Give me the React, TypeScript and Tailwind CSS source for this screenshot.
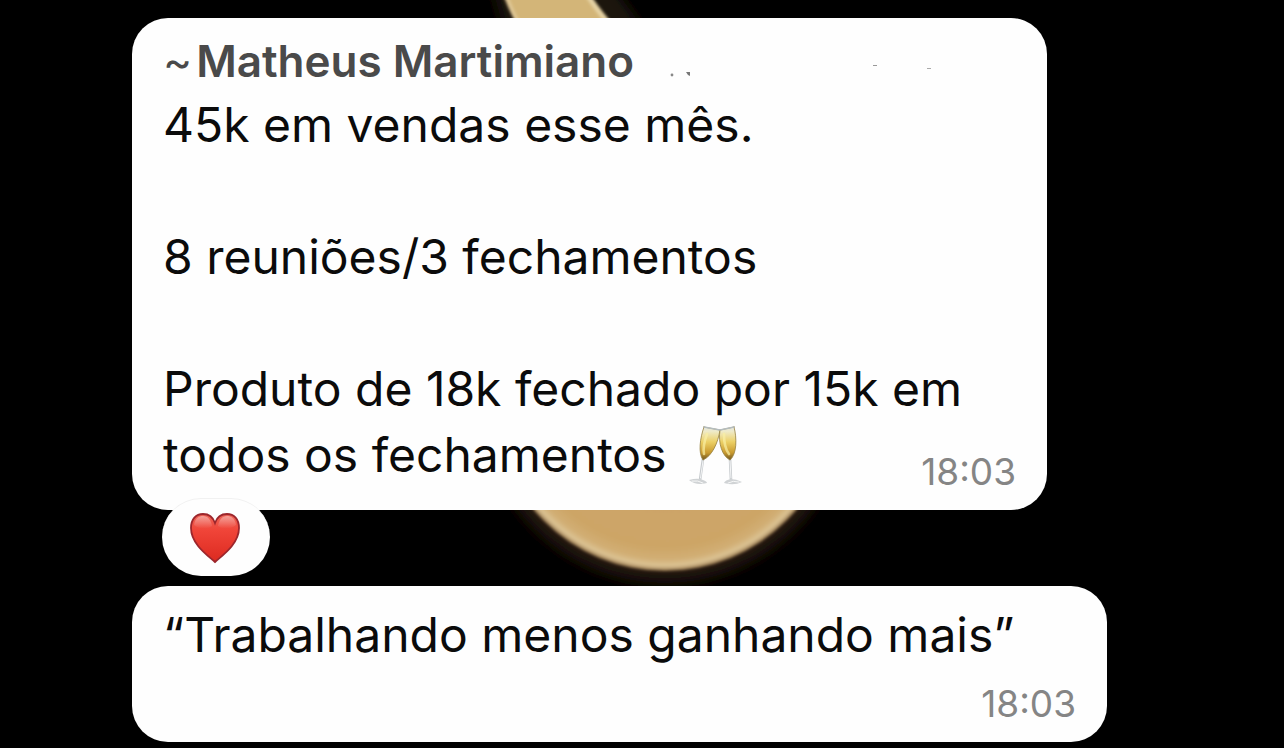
import type { ReactNode } from 'react';

function Backdrop() {
  return (
    <svg
      className="absolute inset-0 h-full w-full"
      viewBox="0 0 1284 748"
      preserveAspectRatio="xMidYMid slice"
      aria-hidden="true"
    >
      <defs>
        <radialGradient id="gold" gradientUnits="userSpaceOnUse" cx="665" cy="399" r="172">
          <stop offset="0.6" stopColor="#cca468" />
          <stop offset="0.86" stopColor="#cda566" />
          <stop offset="0.93" stopColor="#d1ae74" />
          <stop offset="0.97" stopColor="#dcc394" />
          <stop offset="1" stopColor="#94744a" />
        </radialGradient>
        <filter id="halo" x="-20%" y="-20%" width="140%" height="140%">
          <feGaussianBlur stdDeviation="7" />
        </filter>
        <filter id="soft" x="-10%" y="-10%" width="120%" height="120%">
          <feGaussianBlur stdDeviation="1.6" />
        </filter>
      </defs>
      <path d="M490 -20 L504 30 H645 L608 -20 Z" fill="#1c1509" filter="url(#halo)" />
      <circle cx="665" cy="399" r="184" fill="#24190c" filter="url(#halo)" />
      <g filter="url(#soft)">
        <path d="M498 -20 Q506 6 520 30 H617 Q600 10 580 -20 Z" fill="#d3b578" />
        <path d="M501 -20 Q508 6 522 30" fill="none" stroke="#e0c896" strokeWidth="4" />
        <path d="M578 -20 Q596 10 615 30" fill="none" stroke="#e6d3a4" strokeWidth="5" />
        <circle cx="665" cy="399" r="172" fill="url(#gold)" />
      </g>
    </svg>
  );
}

function Glasses() {
  return (
    <svg
      className="ml-2 inline-block h-[60px] w-[54px] align-[-13px]"
      viewBox="0 0 54 60"
      role="img"
      aria-label="Brinde"
    >
      <defs>
        <linearGradient id="wine" x1="0" y1="0" x2="0" y2="1">
          <stop offset="0" stopColor="#e3e6e2" />
          <stop offset="0.14" stopColor="#efeac6" />
          <stop offset="0.45" stopColor="#ecd066" />
          <stop offset="0.78" stopColor="#c99a2f" />
          <stop offset="1" stopColor="#6f5520" />
        </linearGradient>
      </defs>
      <g strokeLinecap="round">
        <path d="M15 34 L12 55" stroke="#c6cacd" strokeWidth="2.6" />
        <path d="M15 36 L12.5 53" stroke="#f4f5f6" strokeWidth="1" />
        <path d="M1 55 Q8 53 12 54 Q19 56 19 58 Q8 61 1 55 Z" fill="#d0d3d5" />
        <path d="M4 56 Q10 55 15 58" fill="none" stroke="#f7f8f8" strokeWidth="1" />
        <path d="M16 2 L32 5 C30 18 24 31 15 35 C10 28 12 13 16 2 Z" fill="url(#wine)" stroke="#96803f" strokeWidth="0.8" />
        <path d="M19 9 C16 17 15 24 16 29" fill="none" stroke="#f9efa4" strokeWidth="2.6" opacity="0.7" />
        <path d="M42 34 L43 55" stroke="#c6cacd" strokeWidth="2.6" />
        <path d="M42 36 L43 53" stroke="#f4f5f6" strokeWidth="1" />
        <path d="M54 57 Q48 54 43 54 Q37 55 36 58 Q46 61 54 57 Z" fill="#d0d3d5" />
        <path d="M51 57 Q45 55 40 58" fill="none" stroke="#f7f8f8" strokeWidth="1" />
        <path d="M46 2 L32 5 C30 18 34 31 42 35 C49 29 49 13 46 2 Z" fill="url(#wine)" stroke="#96803f" strokeWidth="0.8" />
        <path d="M36 9 C36 17 37 24 41 29" fill="none" stroke="#f9efa4" strokeWidth="2.6" opacity="0.7" />
        <path d="M16 2 L32 5 L46 2" fill="none" stroke="#b4bcbe" strokeWidth="1.4" />
      </g>
    </svg>
  );
}

function Heart() {
  return (
    <svg className="h-[52px] w-[52px]" viewBox="0 0 52 52" role="img" aria-label="Amei">
      <defs>
        <linearGradient id="heart" x1="0" y1="0" x2="0" y2="1">
          <stop offset="0" stopColor="#ee6558" />
          <stop offset="0.35" stopColor="#f04438" />
          <stop offset="1" stopColor="#dc2a20" />
        </linearGradient>
        <linearGradient id="shine" x1="0" y1="0" x2="0" y2="1">
          <stop offset="0" stopColor="#fff" stopOpacity="0.4" />
          <stop offset="1" stopColor="#fff" stopOpacity="0" />
        </linearGradient>
      </defs>
      <path
        d="M25 50 C20 45 1 33 1 16 C1 7 6 2 13 2 C19 2 23 5 25 11 C27 5 31 2 37 2 C44 2 49 7 49 16 C49 33 30 45 25 50 Z"
        fill="url(#heart)"
        stroke="#9c262c"
        strokeWidth="1.8"
      />
      <path d="M4 13 C5 6 9 4 13 4 C18 4 21 8 22 14 C16 18 9 17 4 13 Z" fill="url(#shine)" />
      <path d="M46 13 C45 6 41 4 37 4 C32 4 29 8 28 14 C34 18 41 17 46 13 Z" fill="url(#shine)" />
    </svg>
  );
}

function Specks() {
  return (
    <svg className="mb-3 h-4 w-[264px] self-end" viewBox="0 0 264 16" aria-hidden="true">
      <circle cx="2" cy="11" r="1.4" fill="#888" />
      <path d="M16 8 L20 8 L20 12 L18 11 Z" fill="#777" />
      <path d="M203 1.5 H207" stroke="#999" />
      <path d="M257 4.5 H261" stroke="#aaa" />
    </svg>
  );
}

function Bubble({ className, children }: { className: string; children: ReactNode }) {
  return (
    <article className={`w-full rounded-[36px] bg-[#fefefe] px-[31px] pb-4 ${className}`}>{children}</article>
  );
}

function Time({ className }: { className: string }) {
  return (
    <time dateTime="18:03" className={`text-[37px] leading-[44px] text-[#858585] ${className}`}>
      18:03
    </time>
  );
}

export default function App() {
  return (
    <main className="relative min-h-screen overflow-hidden bg-black font-['Inter',sans-serif] text-[#0b0b0b]">
      <Backdrop />
      <div className="relative ml-[132px] mr-4 flex flex-col items-start pb-1 pt-[18px]">
        <Bubble className="max-w-[915px] pt-3">
          <header className="flex items-center text-[44px] leading-[62px] text-[#4a4a4a]">
            <span className="mr-1">~</span>
            <h1 className="mr-9 font-semibold">Matheus Martimiano</h1>
            <Specks />
          </header>
          <div className="flow-root text-[48px] leading-[66px]">
            <p className="mb-[66px]">45k em vendas esse mês.</p>
            <p className="mb-[66px]">8 reuniões/3 fechamentos</p>
            {/* the time floats beside the last line */}
            <p>
              Produto de 18k fechado por 15k em todos os fechamentos <Glasses />
              <Time className="float-right mt-7" />
            </p>
          </div>
        </Bubble>

        <button
          type="button"
          className="-mt-3 ml-[30px] flex h-[78px] w-[108px] items-center justify-center rounded-full border-t border-[#f1f1f1] bg-[#fefefe]"
        >
          <Heart />
        </button>

        <Bubble className="mt-[10px] flex max-w-[975px] flex-col pt-4">
          <p className="text-[48px] leading-[66px]">“Trabalhando menos ganhando mais”</p>
          <Time className="mt-[14px] self-end" />
        </Bubble>
      </div>
    </main>
  );
}
